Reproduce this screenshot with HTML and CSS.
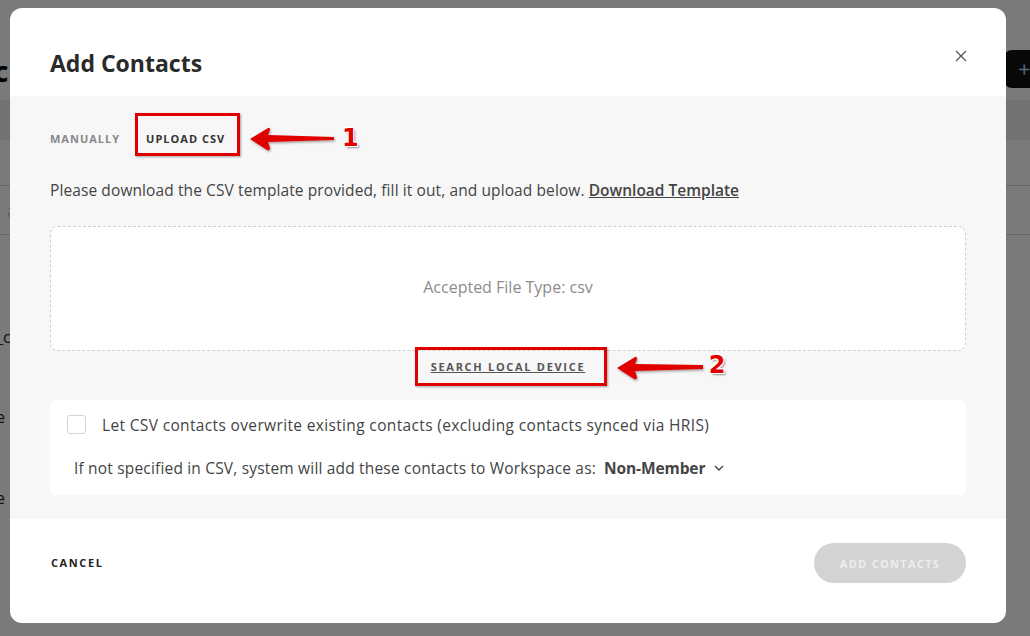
FILE: index.html
```html
<!DOCTYPE html>
<html>
<head>
<meta charset="utf-8">
<link rel="stylesheet" href="styles.css">
</head>
<body>
<div class="page">
  <div class="bg-letter bg-c">c</div>
  <div class="bg-btn">+</div>
  <div class="bg-row r1"></div>
  <div class="bg-input"><span>a</span></div>
  <div class="bg-text t1">_c</div>
  <div class="bg-text t2">e</div>
  <div class="bg-text t3">e</div>
</div>
<div class="overlay"></div>
<div class="modal">
  <header class="modal-head">
    <h1>Add Contacts</h1>
    <button class="close" aria-label="close">
      <svg width="12" height="12" viewBox="0 0 12 12"><path d="M1 1L11 11M11 1L1 11" stroke="#555" stroke-width="1.3" fill="none"/></svg>
    </button>
  </header>
  <section class="modal-body">
    <nav class="tabs">
      <span class="tab">MANUALLY</span>
      <span class="tab active">UPLOAD CSV
        <span class="mark mark1"></span>
        <svg class="arrow arrow1" width="90" height="30" viewBox="0 0 90 30"><defs><filter id="sh" x="-10%" y="-30%" width="130%" height="180%"><feDropShadow dx="1" dy="1.5" stdDeviation="1" flood-color="#000" flood-opacity="0.35"/></filter></defs><path d="M2 15 L20 4 Q22 3 22 6 L20 11 L86 13 L86 16 L20 18 L22 24 Q22 27 19 26 Z" fill="#e00000" filter="url(#sh)"/></svg>
        <span class="num num1">1</span>
      </span>
    </nav>
    <p class="intro">Please download the CSV template provided, fill it out, and upload below. <a>Download Template</a></p>
    <div class="drop">Accepted File Type: csv</div>
    <div class="search-wrap">
      <span class="search">SEARCH LOCAL DEVICE
        <span class="mark mark2"></span>
        <svg class="arrow arrow2" width="92" height="30" viewBox="0 0 92 30"><path d="M2 15 L20 4 Q22 3 22 6 L20 11 L88 12 L88 16 L20 18 L22 24 Q22 27 19 26 Z" fill="#e00000" filter="url(#sh)"/></svg>
        <span class="num num2">2</span>
      </span>
    </div>
    <div class="options">
      <label class="check-row"><span class="box"></span>Let CSV contacts overwrite existing contacts (excluding contacts synced via HRIS)</label>
      <div class="role-row">If not specified in CSV, system will add these contacts to Workspace as:<b>Non-Member</b>
        <svg width="10" height="6" viewBox="0 0 10 6"><path d="M1 1L5 5L9 1" stroke="#444" stroke-width="1.4" fill="none"/></svg>
      </div>
    </div>
  </section>
  <footer class="modal-foot">
    <button class="cancel">CANCEL</button>
    <button class="add">ADD CONTACTS</button>
  </footer>
</div>
</body>
</html>
```
FILE: styles.css
```css
* { box-sizing: border-box; }
html, body { margin: 0; height: 100%; }
body {
  font-family: "Open Sans", "Liberation Sans", sans-serif;
  background: #f4f4f4;
  overflow: hidden;
  position: relative;
  width: 1030px;
  height: 636px;
}
.page { position: absolute; inset: 0; }
.bg-letter { position: absolute; left: -6px; top: 52px; font-size: 28px; font-weight: 700; color: #000; }
.bg-btn { position: absolute; left: 1004px; top: 50px; width: 60px; height: 38px; background: #111; border-radius: 8px; color: #9cf; font-size: 22px; padding-left: 14px; line-height: 36px; }
.bg-row { position: absolute; left: 0; right: 0; height: 40px; background: #e6e6e6; }
.r1 { top: 100px; }
.bg-input { position: absolute; left: -10px; top: 185px; width: 1060px; height: 50px; border: 1px solid #ccc; border-radius: 8px; padding: 14px 0 0 16px; color: #bbb; font-size: 16px; }
.bg-text { position: absolute; left: -4px; font-size: 16px; color: #222; }
.t1 { top: 326px; }
.t2 { top: 406px; }
.t3 { top: 487px; }
.overlay { position: absolute; inset: 0; background: rgba(0,0,0,0.5); }

.modal {
  position: absolute;
  left: 10px; top: 8px;
  width: 996px; height: 615px;
  background: #fff;
  border-radius: 12px;
  overflow: hidden;
  display: flex;
  flex-direction: column;
  color: #333;
}
.modal-head {
  height: 88px;
  display: flex;
  align-items: center;
  justify-content: space-between;
  padding: 0 40px;
  flex: none;
}
.modal-head h1 {
  margin: 22px 0 0;
  font-size: 23px;
  font-weight: 700;
  color: #2a2a2a;
  letter-spacing: 0;
}
.close {
  border: 0; background: none; padding: 0; margin: 0 -2px 0 0;
  width: 14px; height: 14px;
  display: flex; align-items: center; justify-content: center;
  margin-top: 8px;
}
.modal-body {
  background: #f7f7f7;
  height: 423px;
  flex: none;
  padding: 0 40px;
}
.tabs {
  display: flex;
  gap: 26px;
  padding-top: 35px;
  height: 58px;
}
.tab {
  font-size: 11px;
  font-weight: 700;
  letter-spacing: 1px;
  color: #888;
  position: relative;
  line-height: 15px;
}
.tab.active { color: #333; }
.mark {
  position: absolute;
  border: 3px solid #e00000;
  box-shadow: 1px 1px 2px rgba(0,0,0,0.35);
}
.mark1 { left: -11px; top: -18px; width: 105px; height: 43px; }
.arrow { position: absolute; }
.arrow1 { left: 102px; top: -7px; }
.num {
  position: absolute;
  font-family: "DejaVu Sans", sans-serif;
  font-weight: 700;
  font-size: 24px;
  color: #e00000;
  letter-spacing: 0;
  text-shadow: -1px -1px 0 #fff, 1px -1px 0 #fff, -1px 1px 0 #fff, 1px 1px 0 #fff, 2px 2px 2px rgba(0,0,0,0.4);
  line-height: 24px;
}
.num1 { left: 196px; top: -5px; }
.intro {
  margin: 0;
  font-size: 15.5px;
  letter-spacing: 0.1px;
  color: #444;
  line-height: 20px;
  padding-top: 26px;
}
.intro a { text-decoration: underline; color: #444; font-weight: 600; letter-spacing: 0; }
.drop {
  margin-top: 26px;
  height: 125px;
  background: #fff;
  border: 1px dashed #cfcfcf;
  border-radius: 8px;
  display: flex;
  align-items: center;
  justify-content: center;
  color: #8c8c8c;
  font-size: 16px;
  padding-bottom: 3px;
}
.search-wrap {
  display: flex;
  justify-content: center;
  height: 49px;
  padding-top: 8px;
}
.search {
  position: relative;
  font-size: 11px;
  font-weight: 700;
  letter-spacing: 1.7px;
  color: #555;
  text-decoration: underline;
  line-height: 15px;
}
.mark2 { left: -16px; top: -12px; width: 192px; height: 39px; }
.arrow2 { left: 184px; top: -6px; }
.num2 { left: 278px; top: -6px; }
.options {
  background: #fff;
  border-radius: 6px;
  height: 95px;
  padding: 15px 17px 0;
  font-size: 15.5px;
  color: #444;
}
.check-row { display: flex; align-items: center; gap: 16px; height: 19px; letter-spacing: 0.35px; }
.box {
  width: 19px; height: 19px;
  border: 1px solid #d4d4d4;
  border-radius: 3px;
  background: #fff;
  flex: none;
}
.role-row {
  margin-top: 25px;
  padding-left: 7px;
  display: flex;
  align-items: center;
  height: 18px;
  letter-spacing: 0.18px;
}
.role-row b { margin-left: 8px; color: #444; font-weight: 700; margin-right: 9px; letter-spacing: -0.1px; }
.modal-foot {
  flex: 1;
  display: flex;
  align-items: flex-start;
  justify-content: space-between;
  padding: 24px 40px 0 41px;
}
.cancel {
  border: 0; background: none; padding: 0;
  font-family: inherit;
  font-size: 11px;
  font-weight: 700;
  letter-spacing: 1.6px;
  color: #222;
  line-height: 40px;
}
.add {
  border: 0;
  width: 152px; height: 40px;
  border-radius: 20px;
  background: #d3d3d4;
  color: #eeeeee;
  font-family: inherit;
  font-size: 11px;
  font-weight: 700;
  letter-spacing: 1.3px;
  padding-bottom: 1px;
}
```
